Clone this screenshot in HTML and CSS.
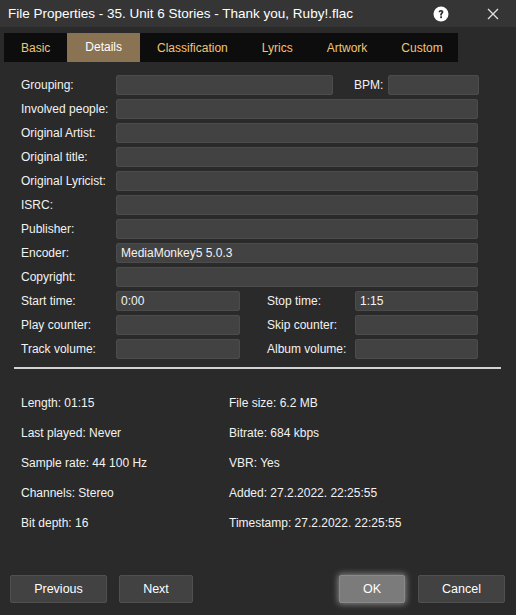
FILE: index.html
```html
<!DOCTYPE html>
<html lang="en">
<head>
    <meta charset="UTF-8">
    <meta name="viewport" content="width=device-width, initial-scale=1.0">
    <title>File Properties</title>
    <link rel="stylesheet" href="styles.css">
</head>
<body>
    <main class="dialog">
        <header class="titleBar">
            <p class="titleText">File Properties - 35. Unit 6 Stories - Thank you, Ruby!.flac</p>
            <div class="titleBtns">
                <!--도움말-->
                <svg class="helpIcon" width="16" height="16" viewBox="0 0 16 16">
                    <circle cx="8" cy="8" r="7.5" fill="#ffffff"/>
                    <path d="M5.6 6.2 C5.6 4.7 6.7 4 8 4 C9.4 4 10.4 4.8 10.4 6 C10.4 7.3 8.9 7.6 8.9 8.8 L8.9 9.4 L7.2 9.4 L7.2 8.6 C7.2 7.2 8.6 6.9 8.6 6.1 C8.6 5.7 8.4 5.4 8 5.4 C7.5 5.4 7.3 5.8 7.3 6.2 Z" fill="#2a2a2a"/>
                    <rect x="7.2" y="10.3" width="1.8" height="1.8" fill="#2a2a2a"/>
                </svg>
                <!--닫기-->
                <svg class="closeIcon" width="12" height="12" viewBox="0 0 12 12">
                    <path d="M1 1 L11 11 M11 1 L1 11" stroke="#e0e0e0" stroke-width="1.3" fill="none"/>
                </svg>
            </div>
        </header>

        <nav class="tabBar">
            <span class="tab">Basic</span>
            <span class="tab active">Details</span>
            <span class="tab">Classification</span>
            <span class="tab">Lyrics</span>
            <span class="tab">Artwork</span>
            <span class="tab">Custom</span>
        </nav>

        <section class="form">
            <div class="row">
                <label class="lbl">Grouping:</label>
                <div class="field groupingField"></div>
                <label class="lbl bpmLbl">BPM:</label>
                <div class="field bpmField"></div>
            </div>
            <div class="row"><label class="lbl">Involved people:</label><div class="field"></div></div>
            <div class="row"><label class="lbl">Original Artist:</label><div class="field"></div></div>
            <div class="row"><label class="lbl">Original title:</label><div class="field"></div></div>
            <div class="row"><label class="lbl">Original Lyricist:</label><div class="field"></div></div>
            <div class="row"><label class="lbl">ISRC:</label><div class="field"></div></div>
            <div class="row"><label class="lbl">Publisher:</label><div class="field"></div></div>
            <div class="row"><label class="lbl">Encoder:</label><div class="field">MediaMonkey5 5.0.3</div></div>
            <div class="row"><label class="lbl">Copyright:</label><div class="field"></div></div>
            <div class="row">
                <label class="lbl">Start time:</label>
                <div class="field halfField">0:00</div>
                <label class="lbl rightLbl">Stop time:</label>
                <div class="field">1:15</div>
            </div>
            <div class="row">
                <label class="lbl">Play counter:</label>
                <div class="field halfField"></div>
                <label class="lbl rightLbl">Skip counter:</label>
                <div class="field"></div>
            </div>
            <div class="row">
                <label class="lbl">Track volume:</label>
                <div class="field halfField"></div>
                <label class="lbl rightLbl">Album volume:</label>
                <div class="field"></div>
            </div>
        </section>

        <hr class="divider">

        <section class="info">
            <p>Length: 01:15</p>
            <p>File size: 6.2 MB</p>
            <p>Last played: Never</p>
            <p>Bitrate: 684 kbps</p>
            <p>Sample rate: 44 100 Hz</p>
            <p>VBR: Yes</p>
            <p>Channels: Stereo</p>
            <p>Added: 27.2.2022. 22:25:55</p>
            <p>Bit depth: 16</p>
            <p>Timestamp: 27.2.2022. 22:25:55</p>
        </section>

        <footer class="btnBar">
            <button class="btn prevBtn">Previous</button>
            <button class="btn nextBtn">Next</button>
            <button class="btn okBtn">OK</button>
            <button class="btn cancelBtn">Cancel</button>
        </footer>
    </main>
</body>
</html>
```

FILE: styles.css
```css
*{
    margin: 0; padding: 0;
    box-sizing: border-box;
    font-family: "Liberation Sans", Arial, sans-serif;
}
body{
    background-color: #2a2a2a;
}
.dialog{
    width: 516px;
    height: 615px;
    background-color: #2a2a2a;
    color: #f2f2f2;
    display: flex;
    flex-direction: column;
    font-size: 12px;
}

/* 제목줄 */
.titleBar{
    height: 27px;
    background-color: #353535;
    display: flex;
    align-items: center;
    padding-left: 8px;
}
.titleText{
    font-size: 13.5px;
    color: #ffffff;
    flex: 1;
}
.titleBtns{
    display: flex;
    align-items: center;
}
.helpIcon{
    margin-right: 38px;
}
.closeIcon{
    margin-right: 17px;
}

/* 탭 */
.tabBar{
    display: flex;
    width: 454px;
    height: 29px;
    margin: 6px 0 13px 4px;
    background-color: #0d0d0d;
}
.tab{
    display: flex;
    align-items: center;
    padding: 0 17px;
    padding-top: 1px;
    font-size: 12px;
    color: #efc676;
}
.tab.active{
    background-color: #8a7353;
    color: #ffffff;
    padding: 0 18px 2px;
}

/* 입력 폼 */
.form{
    display: flex;
    flex-direction: column;
    gap: 4px;
    padding: 0 38px 0 21px;
}
.row{
    display: flex;
    align-items: center;
    height: 20px;
}
.lbl{
    width: 95px;
    flex-shrink: 0;
    white-space: nowrap;
}
.field{
    flex: 1;
    height: 20px;
    background-color: #424242;
    border: 1px solid #4c4c4c;
    border-radius: 2px;
    padding-left: 4px;
    display: flex;
    align-items: center;
}
.groupingField{
    flex: none;
    width: 217px;
}
.bpmLbl{
    width: auto;
    margin-left: 21px;
    margin-right: 5px;
}
.bpmField{
    flex: none;
    width: 91px;
}
.halfField{
    flex: none;
    width: 124px;
}
.rightLbl{
    width: 88px;
    margin-left: 27px;
}

.divider{
    border: 0;
    height: 2px;
    background-color: #d2d2d2;
    margin: 8px 15px 19px 14px;
}

/* 파일 정보 */
.info{
    display: grid;
    grid-template-columns: 208px 1fr;
    grid-auto-rows: 30px;
    padding-left: 21px;
}
.info p{
    display: flex;
    align-items: center;
}

/* 하단 버튼 */
.btnBar{
    margin-top: auto;
    display: flex;
    padding: 0 11px 12px 10px;
    height: 40px;
}
.btn{
    height: 28px;
    background-color: #424242;
    border: 1px solid #505050;
    border-radius: 2px;
    color: #ffffff;
    font-size: 12.5px;
}
.prevBtn{
    width: 97px;
}
.nextBtn{
    width: 74px;
    margin-left: 12px;
}
.okBtn{
    width: 66px;
    margin-left: auto;
    background-color: #7b7b7b;
    border-color: #8a8a8a;
    box-shadow: 0 0 6px 1px rgba(255, 255, 255, 0.45);
}
.cancelBtn{
    width: 87px;
    margin-left: 13px;
}
```
